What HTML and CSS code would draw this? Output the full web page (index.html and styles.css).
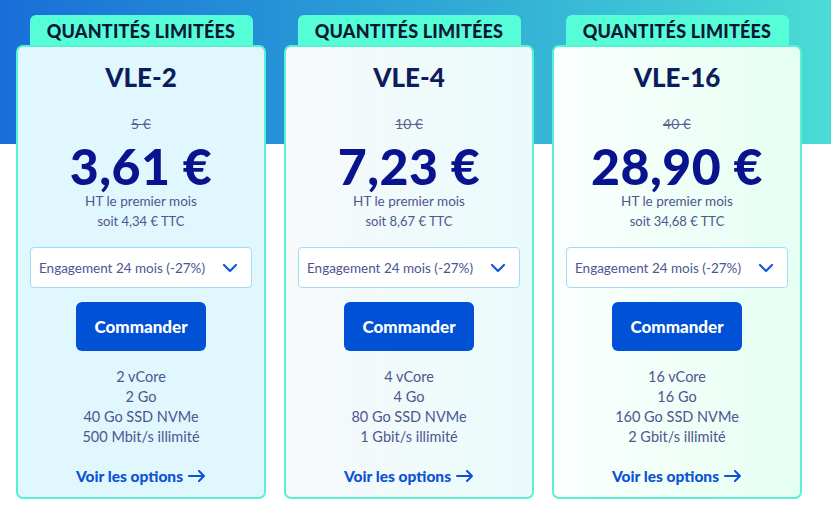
FILE: index.html
```html
<!DOCTYPE html>
<html lang="fr">
<head>
<meta charset="utf-8">
<title>Offres VLE</title>
<link rel="stylesheet" href="styles.css">
</head>
<body>
<div class="plans">
  <div class="plan">
    <div class="badge">QUANTITÉS LIMITÉES</div>
    <div class="card card-a">
      <h2 class="title">VLE-2</h2>
      <div class="old">5 €</div>
      <div class="price">3,61 €</div>
      <div class="sub">HT le premier mois</div>
      <div class="ttc">soit 4,34 € TTC</div>
      <div class="select"><span>Engagement 24 mois (-27%)</span><svg class="chev" width="16" height="10" viewBox="0 0 16 10"><path d="M2 2l6 6 6-6" fill="none" stroke="#1457d9" stroke-width="2.2" stroke-linecap="round" stroke-linejoin="round"/></svg></div>
      <button class="btn">Commander</button>
      <ul class="specs"><li>2 vCore</li><li>2 Go</li><li>40 Go SSD NVMe</li><li>500 Mbit/s illimité</li></ul>
      <a class="more" href="#">Voir les options <svg width="18" height="12" viewBox="0 0 18 12"><path d="M1 6h15M11 1l5 5-5 5" fill="none" stroke="#0b52d6" stroke-width="2" stroke-linecap="round" stroke-linejoin="round"/></svg></a>
    </div>
  </div>
  <div class="plan">
    <div class="badge">QUANTITÉS LIMITÉES</div>
    <div class="card card-b">
      <h2 class="title">VLE-4</h2>
      <div class="old">10 €</div>
      <div class="price">7,23 €</div>
      <div class="sub">HT le premier mois</div>
      <div class="ttc">soit 8,67 € TTC</div>
      <div class="select"><span>Engagement 24 mois (-27%)</span><svg class="chev" width="16" height="10" viewBox="0 0 16 10"><path d="M2 2l6 6 6-6" fill="none" stroke="#1457d9" stroke-width="2.2" stroke-linecap="round" stroke-linejoin="round"/></svg></div>
      <button class="btn">Commander</button>
      <ul class="specs"><li>4 vCore</li><li>4 Go</li><li>80 Go SSD NVMe</li><li>1 Gbit/s illimité</li></ul>
      <a class="more" href="#">Voir les options <svg width="18" height="12" viewBox="0 0 18 12"><path d="M1 6h15M11 1l5 5-5 5" fill="none" stroke="#0b52d6" stroke-width="2" stroke-linecap="round" stroke-linejoin="round"/></svg></a>
    </div>
  </div>
  <div class="plan">
    <div class="badge">QUANTITÉS LIMITÉES</div>
    <div class="card card-c">
      <h2 class="title">VLE-16</h2>
      <div class="old">40 €</div>
      <div class="price">28,90 €</div>
      <div class="sub">HT le premier mois</div>
      <div class="ttc">soit 34,68 € TTC</div>
      <div class="select"><span>Engagement 24 mois (-27%)</span><svg class="chev" width="16" height="10" viewBox="0 0 16 10"><path d="M2 2l6 6 6-6" fill="none" stroke="#1457d9" stroke-width="2.2" stroke-linecap="round" stroke-linejoin="round"/></svg></div>
      <button class="btn">Commander</button>
      <ul class="specs"><li>16 vCore</li><li>16 Go</li><li>160 Go SSD NVMe</li><li>2 Gbit/s illimité</li></ul>
      <a class="more" href="#">Voir les options <svg width="18" height="12" viewBox="0 0 18 12"><path d="M1 6h15M11 1l5 5-5 5" fill="none" stroke="#0b52d6" stroke-width="2" stroke-linecap="round" stroke-linejoin="round"/></svg></a>
    </div>
  </div>
</div>
</body>
</html>
```
FILE: styles.css
```css
* { box-sizing: border-box; }
html, body { margin: 0; padding: 0; }
body {
  font-family: Lato, "Noto Sans", sans-serif;
  background: #fff linear-gradient(90deg, #196ed8 0%, #2a9fd6 45%, #4adcd5 100%) no-repeat;
  background-size: 100% 144px;
  width: 831px;
  height: 514px;
  overflow: hidden;
}
.plans {
  display: flex;
  gap: 18px;
  padding: 15px 0 0 16px;
}
.plan {
  width: 250px;
  display: flex;
  flex-direction: column;
  align-items: center;
}
.badge {
  width: 223px;
  height: 31px;
  background: #55fed7;
  border-radius: 6px 6px 0 0;
  color: #0a1735;
  font-weight: 900;
  font-size: 18px;
  letter-spacing: 0.2px;
  display: flex;
  align-items: center;
  justify-content: center;
  padding-top: 1px;
  margin-bottom: -1px;
}
.card {
  width: 250px;
  border: 2px solid #58f2d2;
  border-radius: 7px;
  padding: 14px 12px 11px;
  display: flex;
  flex-direction: column;
  align-items: center;
  text-align: center;
}
.card-a { background: #e0f7fe; }
.card-b { background: linear-gradient(90deg, #f7f9fb 0%, #eafbfb 100%); }
.card-c { background: linear-gradient(90deg, #fbfffe 0%, #e5fff2 100%); }
.title {
  margin: 0;
  font-size: 26px;
  line-height: 32px;
  font-weight: 900;
  color: #0d1d5b;
}
.old {
  margin-top: 22px;
  font-size: 14px;
  line-height: 18px;
  color: #5a6294;
  text-decoration: line-through;
}
.price {
  margin-top: 8px;
  font-size: 50px;
  line-height: 50px;
  font-weight: 900;
  color: #08138d;
  letter-spacing: 0.5px;
}
.sub, .ttc {
  font-size: 13.5px;
  line-height: 20px;
  color: #4d5691;
}
.ttc { font-size: 13px; }
.select {
  margin-top: 16px;
  width: 222px;
  height: 41px;
  background: #fff;
  border: 1px solid #9fdcfb;
  border-radius: 4px;
  display: flex;
  align-items: center;
  justify-content: space-between;
  padding: 0 13px 0 8px;
  font-size: 13.5px;
  color: #4d5691;
}
.chev { display: block; margin-top: 1px; }
.btn {
  margin-top: 14px;
  width: 130px;
  height: 49px;
  border: 0;
  border-radius: 6px;
  background: #0051d5;
  color: #fff;
  font-family: inherit;
  font-weight: 900;
  font-size: 17px;
}
.specs {
  list-style: none;
  margin: 16px 0 0;
  padding: 0;
  font-size: 14.5px;
  line-height: 20px;
  color: #4d5691;
}
.more {
  margin-top: 19px;
  display: flex;
  align-items: center;
  gap: 5px;
  font-size: 15.5px;
  line-height: 20px;
  font-weight: 900;
  color: #0b52d6;
  text-decoration: none;
}
.more svg { display: block; }
```
